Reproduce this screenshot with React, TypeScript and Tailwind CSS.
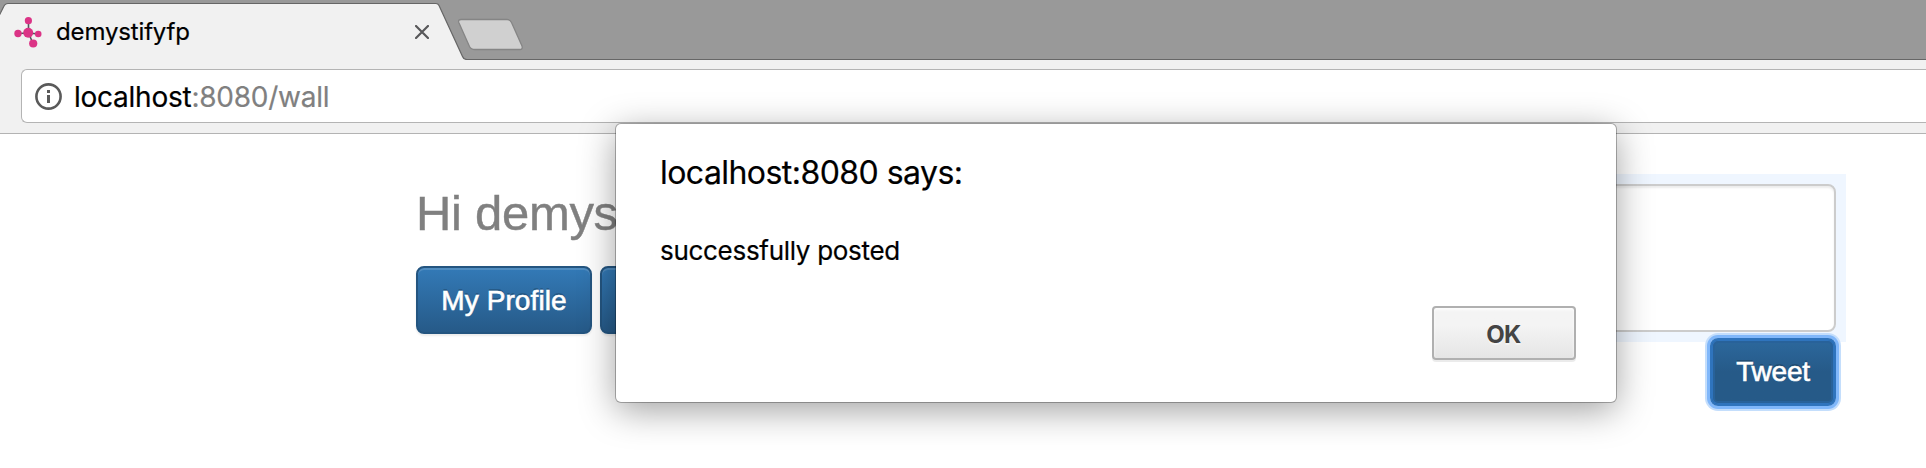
import React from "react";

function Favicon() {
  return (
    <svg className="h-8 w-7 shrink-0" viewBox="0 0 28 32">
      <g stroke="#54545c" strokeWidth="1.6">
        <path d="M14.5 5V17M4 17.5L14.5 17L24.5 18M14.5 17L19 27.5" />
      </g>
      <g fill="#db3486">
        <circle cx="14.4" cy="4.7" r="3.6" />
        <circle cx="4" cy="17.5" r="3.7" />
        <circle cx="24.2" cy="18" r="3.3" />
        <circle cx="19.2" cy="27.5" r="4.1" />
        <circle cx="14.2" cy="16.8" r="5" />
      </g>
    </svg>
  );
}

function TabStrip() {
  return (
    <div className="relative h-[60px] bg-[#999999]">
      <svg className="absolute inset-0 h-[60px] w-full" aria-hidden="true">
        <path
          d="M-4 16H-1L3.5 7Q5 3.5 8 3.5H436Q438 3.5 439 5.5L462.500 56.500Q463.500 59.500 467 59.500H1930V62H-4Z"
          fill="#f1f1f1"
          stroke="#666666"
          strokeWidth="1.2"
        />
        <path
          d="M461 19.500H507Q510 19.500 511.500 22.500L522 46Q523 49.500 520 49.500H475Q471 49.500 469.500 46.500L458.800 22.500Q457.800 19.500 461 19.500Z"
          fill="#d0d0d0"
          stroke="#858585"
          strokeWidth="1.3"
        />
      </svg>
      <div className="relative flex h-[64px] w-[429px] items-center pl-[14px]">
        <Favicon />
        <span className="ml-[14px] font-['Inter','Liberation_Sans',sans-serif] text-[24px] tracking-[-0.15px] text-black [-webkit-text-stroke:0.2px_black]">
          demystifyfp
        </span>
        <svg className="ml-auto h-[14px] w-[14px]" viewBox="0 0 14 14">
          <path d="M1 1L13 13M13 1L1 13" stroke="#58585a" strokeWidth="2.2" strokeLinecap="round" />
        </svg>
      </div>
    </div>
  );
}

function AddressBar() {
  return (
    <div className="h-[74px] border-b border-[#b3b3b3] bg-[#f1f1f1] pt-[9px] pl-[21px]">
      <div className="flex h-[54px] items-center rounded-l-[6px] border border-r-0 border-[#b4b4b4] bg-white pl-[13px]">
        <svg className="h-[27px] w-[27px]" viewBox="0 0 27 27">
          <circle cx="13.500" cy="13.500" r="12.100" fill="none" stroke="#5a5a5a" strokeWidth="2.600" />
          <path d="M12 7H15V10H12ZM12 12H15V20H12Z" fill="#5a5a5a" />
        </svg>
        <span className="mt-[2px] ml-[12px] font-['Inter','Liberation_Sans',sans-serif] text-[28px] tracking-[-0.25px] text-[#808080] [-webkit-text-stroke:0.2px]">
          <span className="text-black">localhost</span>:8080/wall
        </span>
      </div>
    </div>
  );
}

function WallPage() {
  return (
    <main className="flex h-[334px] justify-between bg-white pt-10 pr-20 pl-[416px] font-['Liberation_Sans',sans-serif]">
      <section className="w-[560px]">
        <h3 className="mt-[12px] h-[54px] text-[49px] leading-[54px] tracking-[-0.3px] whitespace-nowrap text-[#808080] [-webkit-text-stroke:0.4px_#808080]">
          Hi demystifyfp
        </h3>
        <div className="mt-[26px] flex gap-2">
          <button className="h-[68px] w-[176px] rounded-[8px] border-2 border-[#245580] bg-linear-to-b from-[#337ab7] to-[#265a88] text-[28px] whitespace-nowrap text-white shadow-[inset_0_2px_0_rgba(255,255,255,0.15),0_2px_2px_rgba(0,0,0,0.075)] [text-shadow:0_-2px_0_rgba(0,0,0,0.2)] [-webkit-text-stroke:0.6px_white]">
            <span className="relative top-px tracking-[0.1px]">My Profile</span>
          </button>
          <button className="h-[68px] w-[136px] rounded-[8px] border-2 border-[#245580] bg-linear-to-b from-[#337ab7] to-[#265a88] text-[28px] whitespace-nowrap text-white shadow-[inset_0_2px_0_rgba(255,255,255,0.15),0_2px_2px_rgba(0,0,0,0.075)] [text-shadow:0_-2px_0_rgba(0,0,0,0.2)]">
            Logout
          </button>
        </div>
      </section>
      <section className="flex w-[780px] flex-col items-end">
        <div className="h-[168px] w-full bg-[#eff6ff] p-[10px]">
          <textarea
            readOnly
            className="block h-full w-full resize-none rounded-[8px] border-2 border-[#cccccc] bg-white shadow-[inset_0_2px_2px_rgba(0,0,0,0.075)] outline-none"
          />
        </div>
        <button className="relative -mt-1 mr-[10px] h-[68px] w-[126px] rounded-[8px] border-2 border-[#2f74bd] bg-linear-to-b from-[#2c689d] from-0% to-[#265a88] to-50% text-[28px] text-white shadow-[inset_0_0_0_1px_#2f74bd,inset_0_0_0_3px_#28629a,0_0_0_3px_#80b7fa,0_0_0_5px_#c4defc] [text-shadow:0_-2px_0_rgba(0,0,0,0.2)] [-webkit-text-stroke:0.6px_white]">
          <span className="tracking-[-0.2px]">Tweet</span>
        </button>
      </section>
    </main>
  );
}

function AlertDialog() {
  return (
    <div
      role="alertdialog"
      className="absolute top-[124px] left-[616px] flex h-[278px] w-[1000px] flex-col rounded-[5px] bg-white pt-[26px] pr-10 pl-[44px] font-['Inter','Liberation_Sans',sans-serif] text-black shadow-[0_0_0_1px_rgba(0,0,0,0.28),0_8px_36px_rgba(0,0,0,0.38)]"
    >
      <h2 className="h-[46px] text-[32px] leading-[46px] tracking-[-0.55px] whitespace-nowrap [-webkit-text-stroke:0.2px_black]">
        localhost:8080 says:
      </h2>
      <p className="mt-[38px] h-[34px] text-[26px] leading-[34px] tracking-[-0.3px] whitespace-nowrap [-webkit-text-stroke:0.2px_black]">
        successfully posted
      </p>
      <button className="mt-[38px] flex h-[54px] w-[144px] items-center justify-center self-end rounded-[4px] border-2 border-[#b0b0b0] bg-linear-to-b from-[#f4f4f4] from-35% to-[#e5e5e5] text-[24px] font-bold text-[#444444] shadow-[0_2px_0_rgba(0,0,0,0.08),inset_0_2px_3px_rgba(255,255,255,0.8)] [text-shadow:0_2px_0_#f4f4f4]">
        <span className="mt-[3px] mr-px tracking-[-0.6px]">OK</span>
      </button>
    </div>
  );
}

export default function App() {
  return (
    <div className="relative h-[468px] w-[1926px] overflow-hidden bg-white">
      <TabStrip />
      <AddressBar />
      <WallPage />
      <AlertDialog />
    </div>
  );
}
